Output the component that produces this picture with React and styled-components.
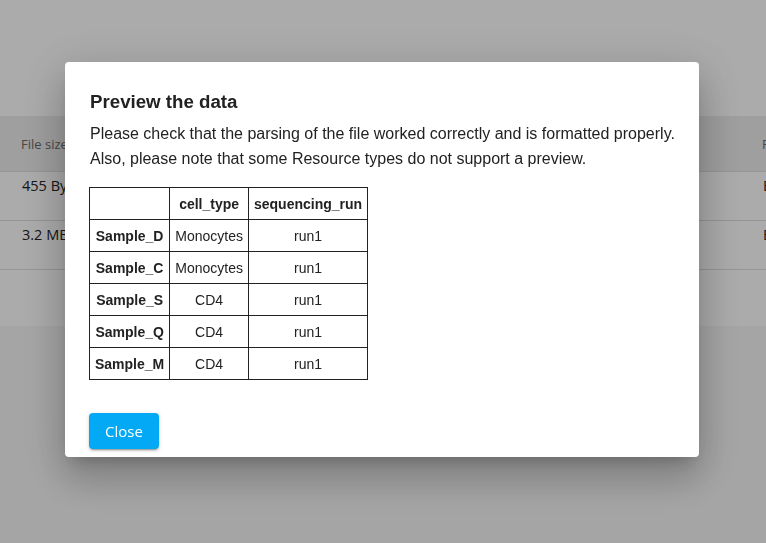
import React from "react";
import styled, { createGlobalStyle } from "styled-components";

const Global = createGlobalStyle`
  html, body { margin: 0; padding: 0; }
  body {
    width: 766px;
    height: 543px;
    overflow: hidden;
    background: #f7f7f7;
    font-family: "Open Sans", "Noto Sans", sans-serif;
  }
`;

const Page = styled.div`
  width: 766px;
  height: 543px;
  overflow: hidden;
  background: #f7f7f7;
`;

const Card = styled.div`
  background: #ffffff;
  padding-top: 116px;
  height: 326px;
  box-sizing: border-box;
`;

const GridRow = styled.div`
  display: flex;
  height: ${(p) => p.$h}px;
  background: ${(p) => (p.$head ? "#ededed" : "#ffffff")};
  border-bottom: 1px solid #dedede;
  box-sizing: border-box;
  align-items: ${(p) => (p.$head ? "center" : "flex-start")};
  padding-top: ${(p) => (p.$head ? 0 : 4)}px;
  overflow: hidden;
`;

const Cell = styled.div`
  flex: 0 0 auto;
  width: ${(p) => p.$w}px;
  padding-left: ${(p) => p.$pl || 0}px;
  font-size: ${(p) => (p.$head ? 13 : 14.5)}px;
  line-height: 20px;
  color: ${(p) => (p.$head ? "#6b6b6b" : "#222222")};
  white-space: nowrap;
`;

const Overlay = styled.div`
  position: fixed;
  inset: 0;
  background: rgba(0, 0, 0, 0.33);
  display: flex;
  justify-content: center;
  align-items: flex-start;
  padding-top: 62px;
  box-sizing: border-box;
`;

const Dialog = styled.div`
  width: 634px;
  box-sizing: border-box;
  margin-left: -2px;
  background: #ffffff;
  border-radius: 4px;
  padding: 29px 24px 8px 24px;
  font-family: "Liberation Sans", Arial, sans-serif;
  color: #222222;
  box-shadow: 0px 11px 15px -7px rgba(0, 0, 0, 0.2),
    0px 24px 38px 3px rgba(0, 0, 0, 0.14),
    0px 9px 46px 8px rgba(0, 0, 0, 0.12);
`;

const Title = styled.h2`
  margin: 0 0 8px 1px;
  font-size: 18.7px;
  line-height: 22px;
  font-weight: bold;
`;

const Text = styled.p`
  margin: 0 0 16px 1px;
  font-size: 16px;
  line-height: 25px;
`;

const Table = styled.table`
  border-collapse: collapse;
  font-size: 14px;
  color: #222222;
`;

const Th = styled.th`
  border: 1px solid #222222;
  height: 32px;
  padding: 0 5px;
  font-weight: bold;
  text-align: center;
  box-sizing: border-box;
`;

const Td = styled.td`
  border: 1px solid #222222;
  height: 32px;
  padding: 0 5px;
  text-align: center;
  box-sizing: border-box;
`;

const Actions = styled.div`
  display: flex;
  margin-top: 33px;
`;

const Button = styled.button`
  height: 36px;
  padding: 0 16px;
  border: none;
  border-radius: 4px;
  background: #03a9f4;
  color: #ffffff;
  font-family: "Open Sans", "Noto Sans", sans-serif;
  font-size: 15px;
  box-shadow: 0px 3px 1px -2px rgba(0, 0, 0, 0.2),
    0px 2px 2px 0px rgba(0, 0, 0, 0.14), 0px 1px 5px 0px rgba(0, 0, 0, 0.12);
  cursor: pointer;
`;

const rows = [
  ["Sample_D", "Monocytes", "run1"],
  ["Sample_C", "Monocytes", "run1"],
  ["Sample_S", "CD4", "run1"],
  ["Sample_Q", "CD4", "run1"],
  ["Sample_M", "CD4", "run1"],
];

export default function App() {
  return (
    <>
      <Global />
      <Page>
        <Card>
          <GridRow $head $h={56}>
            <Cell $head $w={740} $pl={21}>File size</Cell>
            <Cell $head $w={100} $pl={1}>Format</Cell>
          </GridRow>
          <GridRow $h={49}>
            <Cell $w={740} $pl={22}>455 Bytes</Cell>
            <Cell $w={100} $pl={1}>BED</Cell>
          </GridRow>
          <GridRow $h={49}>
            <Cell $w={740} $pl={22}>3.2 MB</Cell>
            <Cell $w={100} $pl={1}>BED</Cell>
          </GridRow>
        </Card>
      </Page>
      <Overlay>
        <Dialog>
          <Title>Preview the data</Title>
          <Text>
            Please check that the parsing of the file worked correctly and is
            formatted properly. Also, please note that some Resource types do
            not support a preview.
          </Text>
          <Table>
            <thead>
              <tr>
                <Th></Th>
                <Th>cell_type</Th>
                <Th>sequencing_run</Th>
              </tr>
            </thead>
            <tbody>
              {rows.map((r) => (
                <tr key={r[0]}>
                  <Th>{r[0]}</Th>
                  <Td>{r[1]}</Td>
                  <Td>{r[2]}</Td>
                </tr>
              ))}
            </tbody>
          </Table>
          <Actions>
            <Button>Close</Button>
          </Actions>
        </Dialog>
      </Overlay>
    </>
  );
}
